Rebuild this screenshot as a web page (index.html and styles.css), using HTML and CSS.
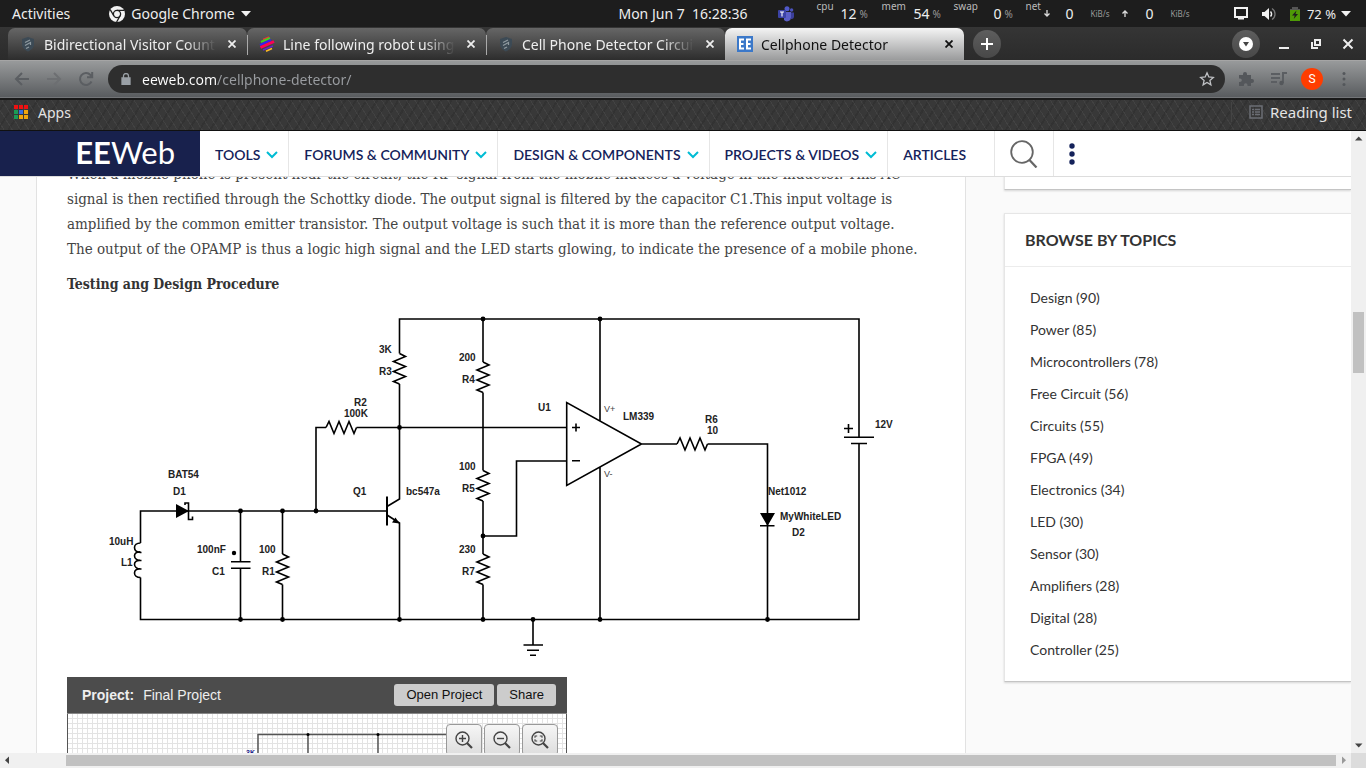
FILE: index.html
```html
<!DOCTYPE html>
<html lang="en">
<head>
<meta charset="utf-8">
<title>Cellphone Detector</title>
<link rel="stylesheet" href="styles.css">
</head>
<body>
<header class="topbar">
  <div class="topbar-left">
    <button class="plain">Activities</button>
    <button class="plain app-menu">
      <svg width="16" height="16" viewBox="0 0 16 16"><circle cx="8" cy="8" r="8" fill="#f2f2f2"/><g fill="none" stroke="#1d1d1d" stroke-width="1.3"><circle cx="8" cy="8" r="3.6"/><path d="M8 4.4h7.3M4.9 9.8L1.2 3.6M11.1 9.8L7.6 16"/></g></svg>
      <span>Google Chrome</span>
      <svg width="10" height="6" viewBox="0 0 10 6"><path d="M0 0h10L5 5.5z" fill="#f2f2f2"/></svg>
    </button>
  </div>
  <div class="clock">Mon Jun 7&nbsp; 16:28:36</div>
  <div class="topbar-right">
    <svg class="teams" width="16" height="16" viewBox="0 0 16 16"><circle cx="9" cy="2.8" r="2.5" fill="#5059c9"/><circle cx="13.6" cy="4" r="1.7" fill="#4b53bc"/><path d="M6 6h7v5a4 4 0 0 1-7 3z" fill="#5b5fc7"/><path d="M13 6.5h3V11a2.5 2.5 0 0 1-3 2z" fill="#3b3f9a"/><rect y="4" width="8" height="8" rx="1" fill="#3c43a5"/><path d="M2 6h4M4 6v4.4" stroke="#fff" stroke-width="1.1"/></svg>
    <div class="monitor">
      <span class="lab">cpu</span><span class="val">12</span><span class="unit">%</span>
      <span class="lab">mem</span><span class="val">54</span><span class="unit">%</span>
      <span class="lab">swap</span><span class="val">0</span><span class="unit">%</span>
      <span class="lab">net</span>
      <svg width="6" height="7" viewBox="0 0 6 7"><path d="M3 0v6M.5 3.500L3 6l2.500-2.500" fill="none" stroke="#ddd" stroke-width="1.3"/></svg>
      <span class="val">0</span><span class="rate">KiB/s</span>
      <svg width="6" height="7" viewBox="0 0 6 7"><path d="M3 7V1M.5 3.500L3 1l2.500 2.500" fill="none" stroke="#ddd" stroke-width="1.3"/></svg>
      <span class="val">0</span><span class="rate">KiB/s</span>
    </div>
    <button class="plain tray" aria-label="System menu">
      <svg width="14" height="13" viewBox="0 0 14 13"><path d="M1 1h12v9H1z" fill="none" stroke="#f2f2f2" stroke-width="2"/><path d="M4 10h6v2.500H4z" fill="#f2f2f2"/></svg>
      <svg width="16" height="14" viewBox="0 0 16 14"><path d="M1 5h2.500L8 1v12L3.500 9H1z" fill="#f2f2f2"/><path d="M9.500 4.500a3.500 3.500 0 0 1 0 5" fill="none" stroke="#f2f2f2" stroke-width="1.500"/><path d="M11 1.500a6.500 6.500 0 0 1 0 11" fill="none" stroke="#777" stroke-width="1.300"/></svg>
      <span class="battery"><svg width="10" height="14" viewBox="0 0 10 14"><path d="M0 2h10v12H0z" fill="#4e9a06"/><path d="M2 0h6v2h2v1H0V2h2z" fill="#555"/><path d="M6.500 3.500L2 8.500h2.700l-1 3.500L8 7H5.500z" fill="#1d1d1d"/></svg>72 %</span>
      <svg class="caret" width="10" height="6" viewBox="0 0 10 6"><path d="M0 0h10L5 5.5z" fill="#f2f2f2"/></svg>
    </button>
  </div>
</header>

<div class="tabstrip" role="tablist">
  <div class="tab">
    <svg width="16" height="16" viewBox="0 0 16 16"><path d="M8 1l6 2v5c0 4-3 6-6 7.500C5 14 2 12 2 8V3z" fill="#3c4a55"/><path d="M5 6.500l5-2.500M5 9.500l5.500-3v2.500M6 12.500l3-1.500" fill="none" stroke="#8f9aa0" stroke-width="1.200"/></svg>
    <button class="title" role="tab">Bidirectional Visitor Counter</button>
    <button class="close" aria-label="Close tab"><svg width="8" height="8" viewBox="0 0 8 8"><path d="M.5.5l7 7M7.500.5l-7 7"/></svg></button>
  </div>
  <div class="tab sep">
    <svg width="16" height="16" viewBox="0 0 16 16"><g fill="none"><path d="M4 3.500l6-2.500" stroke="#e33" stroke-width="1.500"/><path d="M2 6l9-4" stroke="#4c2" stroke-width="2"/><path d="M1 9l11-5" stroke="#32e" stroke-width="2"/><path d="M1.500 11.500L15 5.500" stroke="#f05" stroke-width="3"/><path d="M4 14l10-4" stroke="#62c" stroke-width="1.500"/><path d="M7 15.200l6-2.700" stroke="#fb2" stroke-width="1.500"/></g></svg>
    <button class="title" role="tab">Line following robot using Arduino</button>
    <button class="close" aria-label="Close tab"><svg width="8" height="8" viewBox="0 0 8 8"><path d="M.5.5l7 7M7.500.5l-7 7"/></svg></button>
  </div>
  <div class="tab sep">
    <svg width="16" height="16" viewBox="0 0 16 16"><path d="M8 1l6 2v5c0 4-3 6-6 7.500C5 14 2 12 2 8V3z" fill="#3c4a55"/><path d="M5 6.500l5-2.500M5 9.500l5.500-3v2.500M6 12.500l3-1.500" fill="none" stroke="#8f9aa0" stroke-width="1.200"/></svg>
    <button class="title" role="tab">Cell Phone Detector Circuit</button>
    <button class="close" aria-label="Close tab"><svg width="8" height="8" viewBox="0 0 8 8"><path d="M.5.5l7 7M7.500.5l-7 7"/></svg></button>
  </div>
  <div class="tab active">
    <svg width="16" height="16" viewBox="0 0 16 16"><path d="M0 0h16v16H0z" fill="#3b78c9"/><path d="M7 3.500H3v9h4M3 8h3.500M14 3.500h-4v9h4M10 8h3.500" fill="none" stroke="#fff" stroke-width="2"/></svg>
    <button class="title" role="tab" aria-selected="true">Cellphone Detector</button>
    <button class="close" aria-label="Close tab"><svg width="8" height="8" viewBox="0 0 8 8"><path d="M.5.5l7 7M7.500.5l-7 7"/></svg></button>
  </div>
  <button class="round" aria-label="New tab"><svg width="12" height="12" viewBox="0 0 12 12"><path d="M6 0v12M0 6h12" stroke="#fff" stroke-width="2"/></svg></button>
  <div class="window-controls">
    <button class="round" aria-label="Search tabs"><svg width="14" height="14" viewBox="0 0 14 14"><circle cx="7" cy="7" r="7" fill="#fff"/><path d="M4 5h6L7 9.500z" fill="#444"/></svg></button>
    <button class="plain" aria-label="Minimize"><svg width="12" height="12" viewBox="0 0 12 12"><path d="M1 10h10" stroke="#eee" stroke-width="2"/></svg></button>
    <button class="plain" aria-label="Restore"><svg width="12" height="12" viewBox="0 0 12 12"><path d="M5 2h5v5H5z" fill="none" stroke="#eee" stroke-width="2"/><path d="M2 4v6h6" fill="none" stroke="#eee" stroke-width="2"/></svg></button>
    <button class="plain" aria-label="Close"><svg width="12" height="12" viewBox="0 0 12 12"><path d="M1.500 1.500l9 9M10.500 1.500l-9 9" stroke="#eee" stroke-width="2"/></svg></button>
  </div>
</div>

<div class="toolbar">
  <button class="plain" aria-label="Back"><svg width="16" height="16" viewBox="0 0 16 16"><path d="M15 8H2M8 2L2 8l6 6"/></svg></button>
  <button class="plain dim" aria-label="Forward"><svg width="16" height="16" viewBox="0 0 16 16"><path d="M1 8h13M8 2l6 6-6 6"/></svg></button>
  <button class="plain" aria-label="Reload"><svg width="16" height="16" viewBox="0 0 16 16"><path d="M13.500 10.500A6 6 0 1 1 12.500 4L14 5.500M14.200 1v5.200H9"/></svg></button>
  <div class="omnibox">
    <svg width="10" height="12" viewBox="0 0 10 12"><path d="M1 5h8v6.300H1z"/><path d="M2.500 5V3a2.500 2.500 0 0 1 5 0v2"/></svg>
    <input type="text" aria-label="Address" value="eeweb.com/cellphone-detector/">
    <button class="plain" aria-label="Bookmark this page"><svg width="16" height="16" viewBox="0 0 16 16"><path d="M8 1.800l1.800 4.200 4.500.4-3.400 3 1 4.400L8 11.500l-3.900 2.300 1-4.400-3.400-3L6.200 6z"/></svg></button>
  </div>
  <button class="plain" aria-label="Extensions"><svg width="16" height="16" viewBox="0 0 16 16"><path d="M1 4h4V3a2 2 0 0 1 4 0v1h4v4h1a2 2 0 0 1 0 4h-1v3H9.500v-1a1.800 1.800 0 0 0-3.600 0v1H1v-4h1a1.800 1.800 0 0 0 0-3.600H1z" stroke="none"/></svg></button>
  <button class="plain" aria-label="Media"><svg width="18" height="14" viewBox="0 0 18 14"><path d="M1 2h9M1 6h9M1 10h6M13 11V1h4"/><circle cx="11.500" cy="11" r="2.200" fill="#54575b"/></svg></button>
  <button class="avatar" aria-label="Profile">S</button>
  <button class="plain" aria-label="Menu"><svg width="4" height="16" viewBox="0 0 4 16"><g fill="#54575b"><circle cx="2" cy="2.500" r="1.500"/><circle cx="2" cy="8" r="1.500"/><circle cx="2" cy="13.500" r="1.500"/></g></svg></button>
</div>

<nav class="bookmarks" aria-label="Bookmarks">
  <button class="plain"><svg width="14" height="14" viewBox="0 0 14 14"><path d="M0 0h4v4H0zM5 0h4v4H5zM10 0h4v4h-4z" fill="#e11"/><path d="M0 5h4v4H0z" fill="#1a9c56"/><path d="M5 5h4v4H5z" fill="#3a6fe0"/><path d="M10 5h4v4h-4zM5 10h4v4H5zM10 10h4v4h-4z" fill="#f2a60d"/><path d="M0 10h4v4H0z" fill="#1a9c56"/></svg>Apps</button>
  <button class="plain reading"><svg width="14" height="14" viewBox="0 0 14 14"><path d="M1 1h12v12H1z" fill="none" stroke="#6b6e74" stroke-width="1.500"/><path d="M3 4.500h2M6 4.500h5M3 7h2M6 7h5M3 9.500h2M6 9.500h5" stroke="#6b6e74" stroke-width="1.400"/></svg>Reading list</button>
</nav>

<div class="viewport">
  <div class="page">
    <header class="site-header">
      <a class="logo" href="#"><b>EE</b>Web</a>
      <nav class="site-nav">
        <a href="#">TOOLS<svg width="12" height="8" viewBox="0 0 12 8"><path d="M1 1l5 5 5-5"/></svg></a>
        <a href="#">FORUMS &amp; COMMUNITY<svg width="12" height="8" viewBox="0 0 12 8"><path d="M1 1l5 5 5-5"/></svg></a>
        <a href="#">DESIGN &amp; COMPONENTS<svg width="12" height="8" viewBox="0 0 12 8"><path d="M1 1l5 5 5-5"/></svg></a>
        <a href="#">PROJECTS &amp; VIDEOS<svg width="12" height="8" viewBox="0 0 12 8"><path d="M1 1l5 5 5-5"/></svg></a>
        <a class="wide" href="#">ARTICLES</a>
      </nav>
      <button class="plain search" aria-label="Search"><svg width="28" height="28" viewBox="0 0 28 28"><circle cx="12" cy="12" r="10.800" fill="none" stroke="#666" stroke-width="1.800"/><path d="M19 19.500l7.500 8" stroke="#666" stroke-width="2.200"/></svg></button>
      <button class="plain more" aria-label="More"><svg width="6" height="22" viewBox="0 0 6 22"><g fill="#14225a"><circle cx="3" cy="3" r="2.700"/><circle cx="3" cy="11" r="2.700"/><circle cx="3" cy="19" r="2.700"/></g></svg></button>
    </header>

    <div class="columns">
      <main class="article">
        <p>When a mobile phone is present near the circuit, the RF signal from the mobile induces a voltage in the inductor. This AC<br>signal is then rectified through the Schottky diode. The output signal is filtered by the capacitor C1.This input voltage is<br>amplified by the common emitter transistor. The output voltage is such that it is more than the reference output voltage.<br>The output of the OPAMP is thus a logic high signal and the LED starts glowing, to indicate the presence of a mobile phone.</p>
        <h2>Testing ang Design Procedure</h2>
        <svg class="schematic" viewBox="67 306 868 361" role="img" aria-label="Cell phone detector circuit">
          <defs>
            <path id="res" d="M0 0L6 3 -6 8 6 13 -6 18 6 23 -6 28 0 30.500"/>
          </defs>
          <g fill="none" stroke="#000" stroke-width="1.600">
            <path d="M399.500 353.500V319H859V437M844 437.200h30M851 443.500h16M859 443.500V619.500H140.500V577.500"/>
            <path d="M140.500 543V511H387M140.500 543c-8 0-8 9 0 9.500h1M140.500 552c-8-1-8 8 0 8.500h1M140.500 560.500c-8-1-8 8 0 8.500h1M140.500 569c-8-1-8 8.500 0 8.500"/>
            <path d="M185 505v-2h3.500v16.500h4v-3"/>
            <path d="M240.500 511V561.700M231 561.700h19.500M231 568.300h19.500M240.500 568.300V619.500"/>
            <path d="M282.500 511v43M282.500 584.500v35M316 511V427.500h10M356.500 427.500H566.500"/>
            <path d="M399.500 384V499L387 506.500M387 515L399.500 523V619.500"/>
            <path d="M387 496.500V525.500" stroke-width="2"/>
            <path d="M483 319v43M483 392.500v78M483 501v53M483 584.500v35M483 536h33.500V461h50"/>
            <path d="M566.700 402.500V485.500L641.500 444zM600 319V421M600 467V619.500M641.500 444H677M707.500 444H767.500V619.500M760 525.700h14.500"/>
            <path d="M572 427.500h8M576 423.500v8M572 460.700h8M844 428.500h9M848.500 424v9"/>
            <path d="M533 619.500V645M523.500 645h19.500M527 650.300h12M530 655.300h6"/>
            <use href="#res" x="399.500" y="353.500"/><use href="#res" x="483" y="362"/><use href="#res" x="483" y="470.500"/><use href="#res" x="483" y="554"/><use href="#res" x="282.500" y="554"/>
            <use href="#res" transform="translate(326 427.500) rotate(-90)"/>
            <use href="#res" transform="translate(677 444) rotate(-90)"/>
          </g>
          <path d="M176 504v14l13-7zM760 513h15l-7.500 13zM399.500 523.500l-7.500-1 3.500-5z"/>
          <g>
            <circle cx="483" cy="319" r="2.400"/><circle cx="600" cy="319" r="2.400"/><circle cx="399.500" cy="427.500" r="2.400"/><circle cx="240.500" cy="511" r="2.400"/><circle cx="282.500" cy="511" r="2.400"/><circle cx="316" cy="511" r="2.400"/><circle cx="483" cy="536" r="2.400"/><circle cx="240.500" cy="619.500" r="2.400"/><circle cx="282.500" cy="619.500" r="2.400"/><circle cx="399.500" cy="619.500" r="2.400"/><circle cx="483" cy="619.500" r="2.400"/><circle cx="533" cy="619.500" r="2.400"/><circle cx="600" cy="619.500" r="2.400"/><circle cx="767.500" cy="619.500" r="2.400"/><circle cx="234" cy="553" r="2.200"/>
          </g>
          <g class="labels">
            <text x="379" y="353">3K</text><text x="379" y="375">R3</text>
            <text x="354" y="406">R2</text><text x="344" y="417">100K</text>
            <text x="459" y="361">200</text><text x="462" y="383">R4</text>
            <text x="459" y="470">100</text><text x="462" y="492">R5</text>
            <text x="459" y="553">230</text><text x="462" y="575">R7</text>
            <text x="538" y="411">U1</text><text x="623" y="420">LM339</text>
            <text x="705" y="423">R6</text><text x="707" y="434">10</text>
            <text x="875" y="428">12V</text><text x="768" y="495">Net1012</text>
            <text x="780" y="520">MyWhiteLED</text><text x="792" y="536">D2</text>
            <text x="168" y="478">BAT54</text><text x="173" y="495">D1</text>
            <text x="353" y="495">Q1</text><text x="406" y="495">bc547a</text>
            <text x="109" y="545">10uH</text><text x="121" y="566">L1</text>
            <text x="197" y="553">100nF</text><text x="212" y="575">C1</text>
            <text x="259" y="553">100</text><text x="262" y="575">R1</text>
            <text class="pin" x="604" y="412">V+</text><text class="pin" x="604" y="477">V-</text>
          </g>
        </svg>
        <section class="embed">
          <div class="embed-head">
            <b>Project:</b><span>Final Project</span>
            <button>Open Project</button><button>Share</button>
          </div>
          <div class="canvas">
            <svg class="mini" width="380" height="60" viewBox="0 0 380 60"><g fill="none" stroke="#555" stroke-width="1.500"><path d="M190 60V20.500H380M240 20.500V60M310 20.500V60"/></g><circle cx="240" cy="20.500" r="1.500"/><circle cx="310" cy="20.500" r="1.500"/><text x="178" y="41" class="mini-label">3K</text></svg>
            <div class="zoomers">
              <button aria-label="Zoom in"><svg width="20" height="20" viewBox="0 0 20 20"><circle cx="8.500" cy="8.500" r="6.500"/><path d="M13 13l5 5" stroke-width="2.200"/><path d="M5 8.500h7M8.500 5v7"/></svg></button>
              <button aria-label="Zoom out"><svg width="20" height="20" viewBox="0 0 20 20"><circle cx="8.500" cy="8.500" r="6.500"/><path d="M13 13l5 5" stroke-width="2.200"/><path d="M5 8.500h7"/></svg></button>
              <button aria-label="Zoom to fit"><svg width="20" height="20" viewBox="0 0 20 20"><circle cx="8.500" cy="8.500" r="6.500"/><path d="M13 13l5 5" stroke-width="2.200"/><path d="M5 7.700V6h2.200M9.800 6H12v1.700M12 9.300V11H9.800M7.200 11H5V9.300" stroke-width="1.100"/></svg></button>
            </div>
          </div>
        </section>
      </main>
      <aside class="sidebar">
        <section class="card stub"></section>
        <section class="card">
          <h3>BROWSE BY TOPICS</h3>
          <ul>
            <li><a href="#">Design (90)</a></li>
            <li><a href="#">Power (85)</a></li>
            <li><a href="#">Microcontrollers (78)</a></li>
            <li><a href="#">Free Circuit (56)</a></li>
            <li><a href="#">Circuits (55)</a></li>
            <li><a href="#">FPGA (49)</a></li>
            <li><a href="#">Electronics (34)</a></li>
            <li><a href="#">LED (30)</a></li>
            <li><a href="#">Sensor (30)</a></li>
            <li><a href="#">Amplifiers (28)</a></li>
            <li><a href="#">Digital (28)</a></li>
            <li><a href="#">Controller (25)</a></li>
          </ul>
        </section>
      </aside>
    </div>
  </div>
  <div class="vscroll">
    <svg width="15" height="15" viewBox="0 0 15 15"><path d="M4 9.500h7.500L7.700 5.500z" fill="#444"/></svg>
    <i class="before"></i><i class="thumb"></i><i class="after"></i>
    <svg width="15" height="15" viewBox="0 0 15 15"><path d="M4 5.500h7.500L7.700 9.500z" fill="#444"/></svg>
  </div>
  <div class="hscroll">
    <svg width="15" height="15" viewBox="0 0 15 15"><path d="M9 3.500v7.500L5 7.300z" fill="#444"/></svg>
    <i class="before"></i><i class="thumb"></i>
    <svg width="15" height="15" viewBox="0 0 15 15"><path d="M6 3.500v7.500l4-3.700z" fill="#999"/></svg>
  </div>
  <div class="corner"></div>
</div>
</body>
</html>
```
FILE: styles.css
```css
* { box-sizing: border-box; }
body {
  margin: 0;
  height: 100vh;
  display: flex;
  flex-direction: column;
  overflow: hidden;
  background: #2e2e2e;
  font-family: "Noto Sans", "Open Sans", sans-serif;
  font-size: 14px;
}
button { font: inherit; cursor: pointer; }
svg { flex: none; }
.plain {
  border: 0;
  padding: 0;
  background: none;
  color: inherit;
  display: flex;
  align-items: center;
}

/* Desktop bar */
.topbar {
  flex: none;
  height: 27px;
  display: grid;
  grid-template-columns: 1fr auto 1fr;
  align-items: center;
  background: #1d1d1d;
  color: #eee;
}
.topbar-left { display: flex; gap: 39px; padding-left: 12px; }
.app-menu { gap: 6px; }
.topbar-right { display: flex; align-items: center; padding: 0 15px 0 30px; height: 27px; }
.monitor {
  display: grid;
  grid-template-columns: 24px 16px 25px 30px 18px 24px 36px 12px 24px 18px 12px 18px 48px 14px 18px 36px;
  align-items: center;
  margin-left: 23px;
  height: 27px;
}
.monitor .lab { font-size: 10px; line-height: 12px; align-self: start; color: #bbb; }
.monitor .val { text-align: right; }
.monitor .unit { font-size: 10px; color: #999; padding-left: 3px; }
.monitor .rate { font-size: 8px; color: #999; padding-left: 17px; white-space: nowrap; }
.tray { gap: 13px; margin-left: auto; }
.battery { display: flex; align-items: center; gap: 7px; font-size: 13px; white-space: nowrap; }
.caret { margin-left: -8px; }

/* Tabs */
.tabstrip {
  flex: none;
  height: 33px;
  display: flex;
  align-items: flex-end;
  padding: 0 10px 0 8px;
  background: linear-gradient(#353535, #2b2b2b);
}
.tab {
  position: relative;
  flex: 0 1 239px;
  min-width: 0;
  height: 32px;
  display: flex;
  align-items: center;
  gap: 8px;
  padding: 0 7px 0 12px;
  border-radius: 7px 7px 0 0;
  background: linear-gradient(#666, #2d2d2d);
  color: #eee;
}
.tab.sep::before {
  content: "";
  position: absolute;
  left: 0;
  top: 7px;
  width: 1px;
  height: 20px;
  background: #aaa;
}
.title {
  flex: 1;
  min-width: 0;
  border: 0;
  padding: 0;
  background: none;
  color: inherit;
  text-align: left;
  white-space: nowrap;
  overflow: hidden;
  mask-image: linear-gradient(90deg, #000 82%, transparent);
}
.close {
  border: 0;
  padding: 0;
  width: 16px;
  height: 16px;
  display: grid;
  place-items: center;
  background: none;
}
.close path { stroke: #eee; stroke-width: 1.8; }
.tab.active { background: linear-gradient(#f4f4f4, #9a9b9c); color: #111; }
.tab.active .close path { stroke: #111; }
.round {
  flex: none;
  align-self: center;
  width: 28px;
  height: 28px;
  border: 0;
  padding: 0;
  border-radius: 50%;
  display: grid;
  place-items: center;
  background: linear-gradient(#5e5e5e, #484848);
}
.tab + .round { margin-left: 9px; }
.window-controls { margin-left: auto; align-self: center; display: flex; align-items: center; gap: 20px; padding-right: 2px; }
.window-controls .round { margin-right: -2px; }

/* Toolbar */
.toolbar {
  flex: none;
  height: 38px;
  display: flex;
  align-items: center;
  gap: 16px;
  padding: 0 20px 0 14px;
  border-top: 1px solid #a5a5a5;
  border-bottom: 1px solid #737578;
  background: linear-gradient(#989a9b, #595c5f);
}
.toolbar path { stroke: #5b5e62; stroke-width: 2; fill: none; }
.toolbar path[stroke="none"] { stroke: none; fill: #54575b; }
.toolbar .dim path { stroke: #6d6f72; }
.omnibox {
  flex: 1;
  height: 28px;
  margin: 0 -3px 0 -2px;
  display: flex;
  align-items: center;
  gap: 10px;
  padding: 0 10px 0 13px;
  border-radius: 14px;
  background: #2e2e2e;
}
.omnibox svg path { stroke-width: 1.3; stroke: #c0c2c5; }
.omnibox > svg path { stroke: #9aa0a6; }
.omnibox > svg path:first-child { fill: #9aa0a6; }
.omnibox input {
  flex: 1;
  min-width: 0;
  border: 0;
  padding: 0 0 0 1px;
  outline: 0;
  font: inherit;
  color: #fff;
  background: linear-gradient(90deg, #fff 75px, #9a9da1 75px);
  background-clip: text;
  -webkit-text-fill-color: transparent;
}
.avatar {
  width: 22px;
  height: 22px;
  margin: 0 3px 0 -3px;
  border: 0;
  padding: 0;
  border-radius: 50%;
  background: #ff3d00;
  color: #fff;
  font: 12px Roboto, sans-serif;
}

/* Bookmarks */
.bookmarks {
  flex: none;
  height: 33px;
  display: flex;
  justify-content: space-between;
  align-items: center;
  padding: 0 14px 6px;
  border-top: 2px solid #1a1a1a;
  border-bottom: 1px solid #111;
  color: #e4e4e4;
  background:
    repeating-linear-gradient(58deg, transparent 0 3px, rgba(255, 255, 255, .05) 3px 4px, transparent 4px 7px),
    repeating-linear-gradient(122deg, transparent 0 4px, rgba(0, 0, 0, .1) 4px 6px, transparent 6px 9px),
    #383838;
}
.bookmarks .plain { gap: 10px; }
.bookmarks .reading { gap: 9px; padding-left: 17px; border-left: 1px solid #444; font-size: 15px; line-height: 20px; }
.bookmarks .reading { gap: 7px; }

/* Page viewport with scrollbars */
.viewport {
  flex: 1;
  min-height: 0;
  display: grid;
  grid-template: minmax(0, 1fr) 15px / minmax(0, 1fr) 15px;
}
.page { overflow: hidden; background: #fafafa; }
.site-header {
  position: relative;
  z-index: 1;
  height: 46px;
  display: flex;
  background: #fff;
  border-bottom: 1px solid #ddd;
  font-family: Lato, sans-serif;
}
.logo {
  width: 200px;
  height: 45px;
  padding: 0 25px 3px 0;
  display: flex;
  align-items: center;
  justify-content: flex-end;
  background: #18214d;
  color: #fff;
  font-size: 31px;
  font-weight: 400;
  text-decoration: none;
}
.logo b { font-weight: 700; }
.site-nav { display: flex; }
.site-nav a {
  display: flex;
  align-items: center;
  gap: 6px;
  padding: 2px 10px 0 15px;
  border-right: 1px solid #e6e6e6;
  color: #14225a;
  font-size: 14px;
  font-weight: 600;
  text-decoration: none;
  white-space: nowrap;
}
.site-nav a.wide { padding-right: 28px; }
.site-nav path { fill: none; stroke: #00bcd4; stroke-width: 2; }
.search { padding: 0 15px; border-right: 1px solid #e6e6e6; }
.more { padding: 0 15px; }

.columns { display: flex; gap: 38px; margin-top: -16px; padding-left: 36px; }
.article {
  flex: 1;
  min-width: 0;
  padding: 1px 30px 0;
  background: #fff;
  border: solid #e2e2e2;
  border-width: 0 1px;
  color: #444;
  font-family: "DejaVu Serif Condensed", "DejaVu Serif", serif;
  font-size: 15px;
  line-height: 25px;
}
.article p { margin: 0 0 10px; white-space: nowrap; }
.article h2 { margin: 0 0 9px; font-size: 14px; line-height: 25px; color: #333; }
.schematic { display: block; width: 100%; height: auto; margin-bottom: 10px; }
.labels { font: bold 10px "Liberation Sans", sans-serif; fill: #222; }
.labels .pin { font-weight: 400; font-size: 9px; fill: #444; }

.embed { max-width: 500px; font: 14px/20px "Liberation Sans", Arial, sans-serif; }
.embed-head {
  height: 37px;
  display: flex;
  align-items: center;
  gap: 3px;
  padding: 0 11px 0 15px;
  background: #4c4c4c;
  border-bottom: 1px solid #888;
  color: #eee;
}
.embed-head span { flex: 1; padding-left: 6px; }
.embed-head button {
  height: 22px;
  padding: 0 12px;
  border: 0;
  border-radius: 3px;
  background: #ccc;
  color: #111;
  font-size: 13px;
}
.canvas {
  display: flex;
  height: 200px;
  border: solid #555;
  border-width: 0 1px;
  background:
    linear-gradient(#e3e3e3 1px, transparent 1px) 0 4px / 5px 5px,
    linear-gradient(90deg, #e3e3e3 1px, transparent 1px) 4px 0 / 5px 5px,
    #fff;
}
.mini-label { font: bold 7px "Liberation Sans", sans-serif; fill: #22228a; }
.zoomers { display: flex; gap: 2px; padding-top: 10px; margin-left: -2px; }
.zoomers button {
  width: 36px;
  height: 32px;
  padding: 0;
  display: grid;
  place-items: center;
  border: 1px solid #999;
  border-radius: 4px;
  background: linear-gradient(#f6f6f6, #ddd);
}
.zoomers svg { fill: none; stroke: #444; stroke-width: 1.4; }

.sidebar { flex: 0 0 347px; font-family: Lato, sans-serif; }
.card {
  background: #fff;
  border: 1px solid #e6e6e6;
  border-right: 0;
  border-bottom: 1px solid #c4c4c4;
  box-shadow: 0 1px 2px rgba(0, 0, 0, .15);
  color: #333;
}
.card.stub { height: 29px; margin-bottom: 23px; }
.card h3 { margin: 0; padding: 16px 20px; font-size: 16px; line-height: 20px; border-bottom: 1px solid #ececec; }
.card ul { margin: 0; padding: 15px 25px; list-style: none; }
.card li { font-size: 14px; line-height: 32px; }
.card a { color: inherit; text-decoration: none; }

.vscroll, .hscroll { display: flex; background: #f0f0f0; }
.vscroll { flex-direction: column; }
.vscroll .before { flex: 166; }
.vscroll .thumb { flex: 61; margin: 0 2px; background: #c1c1c1; }
.vscroll .after { flex: 365; }
.hscroll .before { flex: 51; }
.hscroll .thumb { flex: 1270; margin: 2px 0; background: #c1c1c1; }
.corner { background: #dcdcdc; }
```
